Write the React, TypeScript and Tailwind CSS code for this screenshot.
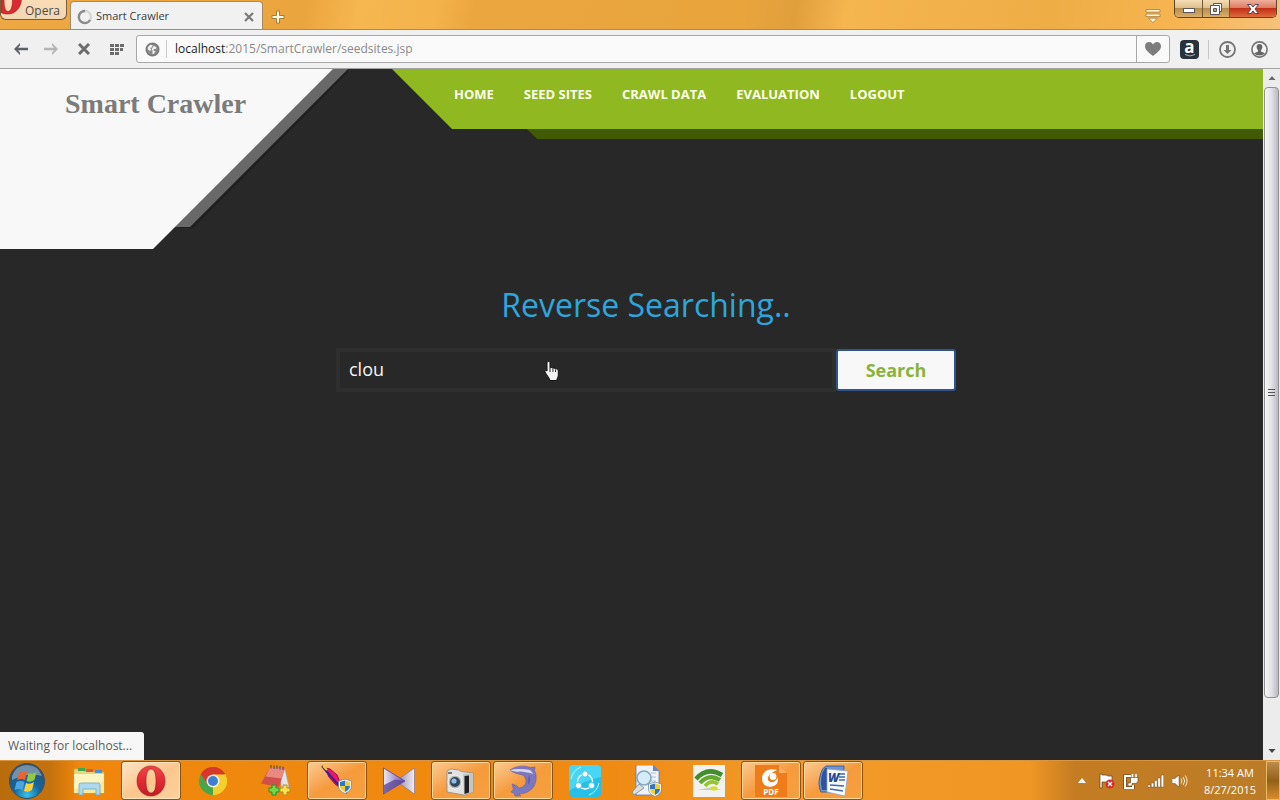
import { useState } from "react";
import type { ReactNode } from "react";

function OperaO({ className }: { className: string }) {
  return (
    <svg viewBox="0 0 30 32" className={className} aria-hidden="true">
      <defs>
        <linearGradient id="operaRed" x1="0" y1="0" x2="0" y2="1">
          <stop offset="0" stopColor="#f0474b" />
          <stop offset="0.5" stopColor="#e02a30" />
          <stop offset="1" stopColor="#bf1f26" />
        </linearGradient>
      </defs>
      <path
        fillRule="evenodd"
        d="M15 1C7 1 1 7.500 1 16s6 15 14 15 14-6.500 14-15S23 1 15 1Zm0 3c3.600 0 5 5 5 12s-1.400 12-5 12-5-5-5-12 1.400-12 5-12Z"
        fill="url(#operaRed)"
        stroke="#a8181d"
        strokeWidth="0.6"
      />
    </svg>
  );
}

function TitleBar() {
  return (
    <div className="flex h-[29px] items-start bg-[linear-gradient(100deg,#eda843_0%,#eba53e_24%,#f6b750_28%,#f4b34b_34%,#eba640_37%,#e9a53c_58%,#e19f3c_62%,#f5b54f_66%,#efad46_82%,#f7b552_92%,#f6c27a_100%)]">
      <button
        type="button"
        className="flex h-5 w-[67px] items-end overflow-hidden rounded-b-md border border-t-0 border-[#7b5a34] bg-gradient-to-b from-[#f8dcb6] to-[#f3d6b4] text-[12px] leading-4 text-[#4b4b4b]"
      >
        <svg viewBox="0 0 22 20" className="h-5 w-[22px] shrink-0" aria-hidden="true">
          <path
            fillRule="evenodd"
            d="M0 0h20.500C20 8 15 15 7 15 4 15 2 14.500 0 13.500ZM3 0c0 8 1 12.500 4 12.500S11.500 8 11.500 0Z"
            fill="#dc2830"
            stroke="#a8181d"
            strokeWidth="0.6"
          />
        </svg>
        <span className="ml-0.5">Opera</span>
      </button>
      <div className="ml-[3px] mt-px flex h-7 w-[193px] items-center rounded-t-[4px] border border-b-0 border-[#a08c6c] bg-[#f1f1f1] pl-1.5 pr-2 pt-0.5">
        <svg viewBox="0 0 16 16" className="h-4 w-4" fill="none" strokeWidth="2.400" aria-hidden="true">
          <circle cx="8" cy="8" r="6" stroke="#d6d6d6" />
          <path d="M8 2a6 6 0 1 0 5 9" stroke="#8b8b8b" />
        </svg>
        <span className="ml-[3px] flex-1 whitespace-nowrap text-[11px] text-[#3c3c3c]">Smart Crawler</span>
        <button type="button" aria-label="Close tab">
          <svg viewBox="0 0 10 10" className="h-[10px] w-[10px]" stroke="#7a7a7a" strokeWidth="2.200" aria-hidden="true">
            <path d="M1 1l8 8M9 1L1 9" />
          </svg>
        </button>
      </div>
      <button type="button" aria-label="New tab" className="ml-2 mt-2.5">
        <svg viewBox="0 0 14 14" className="h-[14px] w-[14px]" aria-hidden="true">
          <path
            d="M5.500 1h3v4.500H13v3H8.500V13h-3V8.500H1v-3h4.500Z"
            fill="#fff8e4"
            stroke="#a87c3a"
          />
        </svg>
      </button>
      <div className="flex-1" />
      <button type="button" aria-label="Tab menu" className="mr-3 mt-2">
        <svg viewBox="0 0 18 16" className="h-4 w-[18px]" fill="#fff4d8" stroke="#a87c3a" strokeWidth="0.8" aria-hidden="true">
          <path d="M2 1.500h14v2.600H2ZM2 6h14v2.600H2ZM4.500 10.200h9L9 14.600Z" />
        </svg>
      </button>
      <div className="mr-[3px] flex h-[18px] w-[103px] overflow-hidden rounded-b-[5px] border border-t-0 border-[#5d4630]">
        <button type="button" aria-label="Minimize" className="flex w-7 items-center justify-center border-r border-[#6f5738] bg-[linear-gradient(#f3dcb4_0%,#dfbf8e_45%,#b98d4c_50%,#d9ae68_100%)]">
          <svg viewBox="0 0 14 10" className="h-[10px] w-[14px]" aria-hidden="true">
            <rect x="1.500" y="4.500" width="11" height="4" fill="#fff" stroke="#5b5560" />
          </svg>
        </button>
        <button type="button" aria-label="Restore" className="flex w-[27px] items-center justify-center border-r border-[#6f5738] bg-[linear-gradient(#f3dcb4_0%,#dfbf8e_45%,#b98d4c_50%,#d9ae68_100%)]">
          <svg viewBox="0 0 14 14" className="h-[14px] w-[14px]" fill="#fff" stroke="#5b5560" aria-hidden="true">
            <path d="M4.500 1.500h8v8h-8Z" />
            <path d="M1.500 3.500h9v9h-9Z" />
            <path d="M4.500 6.500h3v3h-3Z" fill="#c79c60" />
          </svg>
        </button>
        <button type="button" aria-label="Close" className="flex flex-1 items-center justify-center bg-[linear-gradient(#eeb09a_0%,#dd7c62_45%,#c23017_50%,#df6a3c_100%)]">
          <svg viewBox="0 0 14 12" className="h-3 w-[14px]" aria-hidden="true">
            <path d="M1.500 1.500h3.500l2 2.500 2-2.500h3.500L9 6l3.500 4.500H9L7 8l-2 2.500H1.500L5 6Z" fill="#fff" stroke="#5f4350" />
          </svg>
        </button>
      </div>
    </div>
  );
}

function Toolbar() {
  return (
    <div className="flex h-10 items-center border-y border-t-[#a88c5c] border-b-[#a3a3a3] bg-[#f0f0f0] pl-3.5 pr-3">
      <button type="button" aria-label="Back">
        <svg viewBox="0 0 14 12" className="h-3 w-[14px]" aria-hidden="true">
          <path d="M0 6l6-6v2.500L4 4.800h10v2.400H4l2 2.300V12Z" fill="#5c6268" />
        </svg>
      </button>
      <button type="button" aria-label="Forward" className="ml-4">
        <svg viewBox="0 0 14 12" className="h-3 w-[14px]" aria-hidden="true">
          <path d="M14 6L8 0v2.500l2 2.300H0v2.400h10L8 9.500V12Z" fill="#b4b4b4" />
        </svg>
      </button>
      <button type="button" aria-label="Stop" className="ml-5">
        <svg viewBox="0 0 12 12" className="h-3 w-3" stroke="#6c6c6c" strokeWidth="3" aria-hidden="true">
          <path d="M1 1l10 10M11 1L1 11" />
        </svg>
      </button>
      <button type="button" aria-label="Speed Dial" className="ml-5">
        <svg viewBox="0 0 14 11" className="h-[11px] w-[14px]" fill="#6c6c6c" aria-hidden="true">
          <path d="M0 0h4v3H0ZM5 0h4v3H5ZM10 0h4v3h-4ZM0 4h4v3H0ZM5 4h4v3H5ZM10 4h3v3h-3ZM0 8h4v3H0ZM5 8h4v3H5Z" />
        </svg>
      </button>
      <div className="ml-3 flex h-7 flex-1 items-stretch rounded-[3px] border border-[#a8a8a8] bg-[#fafafa]">
        <div className="my-1 flex w-[30px] items-center justify-center border-r border-[#cccccc] pl-0.5">
          <svg viewBox="0 0 16 16" className="h-[15px] w-[15px]" aria-hidden="true">
            <circle cx="8" cy="8" r="6.600" fill="#8c8c8c" stroke="#7a7a7a" strokeWidth="1.800" />
            <path d="M3 5.500l2.500-2.500 2.500.5-.5 2-2 1 1 1.500-1 1.500L3 8ZM9.500 4l3 2-1.500 1.500H9l.5 2 1.500.500-1.500 2.500-1.500.500V9L7 8l1-2Z" fill="#f2f2f2" />
          </svg>
        </div>
        <p className="flex-1 self-center pl-2 text-[12px] text-[#8a8a8a]">
          <span className="text-[#222]">localhost</span>:2015/SmartCrawler/seedsites.jsp
        </p>
        <button type="button" aria-label="Bookmark" className="flex w-[33px] items-center justify-center border-l border-[#a8a8a8]">
          <svg viewBox="0 0 16 14" className="h-[14px] w-4" aria-hidden="true">
            <path d="M8 14C4 11 0 8 0 4.300 0 1.500 2 0 4 0c1.800 0 3.200 1 4 2.500C8.800 1 10.200 0 12 0c2 0 4 1.500 4 4.300C16 8 12 11 8 14Z" fill="#7d7d7d" />
          </svg>
        </button>
      </div>
      <button type="button" aria-label="Amazon" className="ml-2.5 flex h-[19px] w-[19px] flex-col items-center rounded-sm bg-[#28323c] text-[17px] font-bold leading-[14px] text-white">
        <span>a</span>
        <svg viewBox="0 0 12 3" className="h-[3px] w-3" fill="none" stroke="#a9b2ba" aria-hidden="true">
          <path d="M1 0.500q5 3 10 0" />
        </svg>
      </button>
      <div className="ml-[9px] h-[19px] w-px bg-[#c6c6c6]" />
      <button type="button" aria-label="Downloads" className="ml-2.5">
        <svg viewBox="0 0 17 17" className="h-[17px] w-[17px]" aria-hidden="true">
          <circle cx="8.500" cy="8.500" r="7.500" fill="none" stroke="#747474" strokeWidth="1.800" />
          <path d="M7 4h3v5h2.500l-4 4-4-4H7Z" fill="#747474" />
        </svg>
      </button>
      <button type="button" aria-label="Account" className="ml-[15px]">
        <svg viewBox="0 0 17 17" className="h-[17px] w-[17px]" aria-hidden="true">
          <circle cx="8.500" cy="8.500" r="7.600" fill="#f4f4f4" stroke="#747474" strokeWidth="1.600" />
          <path d="M8.500 3C6.500 3 5.500 4.300 5.600 6c.1 1.500.7 2.500 1.400 3.200v1.300L3 12.200a7.500 7.500 0 0 0 11 0l-4-1.700V9.200c.7-.7 1.300-1.700 1.400-3.200C11.500 4.300 10.500 3 8.500 3Z" fill="#666" />
        </svg>
      </button>
    </div>
  );
}

const navItems = ["HOME", "SEED SITES", "CRAWL DATA", "EVALUATION", "LOGOUT"];

function SiteHeader() {
  return (
    <header className="flex items-start">
      <div className="relative h-[180px] w-[348px] shrink-0">
        <svg viewBox="0 0 348 180" className="absolute inset-0 h-full w-full" aria-hidden="true">
          <path d="M336 0h15L193 159h-15Z" fill="#1f1f1f" />
          <path d="M333 0h15L190 158h-15Z" fill="#696969" />
          <path d="M0 0h333L153 180H0Z" fill="#f8f8f8" />
        </svg>
        <a href="#home" className="relative ml-[65px] mt-3 block w-fit whitespace-nowrap font-['Liberation_Serif',serif] text-[28px] font-bold leading-[46px] text-[#7b7b7b]">
          Smart Crawler
        </a>
      </div>
      <div className="ml-11 flex-1">
        <nav className="h-[60px] bg-[#8fb821] pl-[62px] [clip-path:polygon(0_0,100%_0,100%_100%,60px_100%)]">
          <ul className="flex h-[52px] items-center gap-[30px] whitespace-nowrap text-[13px] font-bold text-[#fbffe8]">
            {navItems.map((item) => (
              <li key={item}>
                <a href={"#" + item.toLowerCase().replace(" ", "-")}>{item}</a>
              </li>
            ))}
          </ul>
        </nav>
        <div className="ml-[135px] h-2.5 bg-[#425a00] [clip-path:polygon(0_0,100%_0,100%_100%,10px_100%)]" />
      </div>
    </header>
  );
}

function SearchSection() {
  const [query, setQuery] = useState("clou");
  return (
    <section className="flex flex-col items-center pl-[29px] pt-8">
      <h1 className="text-[32px] leading-[48px] text-[#2ea6dd]">Reverse Searching..</h1>
      <form className="relative mt-[19px] flex w-full max-w-[620px]" onSubmit={(e) => e.preventDefault()}>
        <input
          type="text"
          aria-label="Search term"
          value={query}
          onChange={(e) => setQuery(e.target.value)}
          className="h-11 min-w-0 flex-1 border-4 border-[#2f2f2f] bg-[#282828] px-[9px] pb-0.5 text-[18px] text-[#f6f6f6] outline-none"
        />
        <button type="submit" className="my-px h-[42px] w-[120px] rounded-[3px] border-2 border-[#31548c] bg-[#f8f8f8] text-[18px] font-bold text-[#8ab33a]">
          Search
        </button>
        <svg viewBox="0 0 16 22" className="absolute left-[208px] top-3 h-[22px] w-4" aria-hidden="true">
          <path
            d="M4.500 1.500c1.200 0 1.500.6 1.500 1.500v5c.8-.8 2.400-.6 2.800.3.900-.5 2.100-.1 2.500.7 1.500-.5 3 .3 3 2v4c0 2-1.300 3-1.500 5.500H6C5.500 18 3 15.500 1 12c-.6-1.500 1-2 2-1V3c0-.9.600-1.500 1.500-1.500Z"
            fill="#f4f4f4"
            stroke="#111"
          />
          <path d="M6 8v4M8.900 8.500V12M11.500 9.500V12" stroke="#333" fill="none" />
        </svg>
      </form>
    </section>
  );
}

function Scrollbar() {
  return (
    <div className="flex w-[17px] shrink-0 flex-col items-center bg-[#ececec]" aria-hidden="true">
      <svg viewBox="0 0 17 18" className="h-[18px] w-[17px]">
        <path d="M5.500 11l3.500-4 3.500 4Z" fill="#6a6a6a" />
      </svg>
      <div className="flex w-[15px] flex-[611] items-center justify-center rounded-sm border border-[#909090] bg-gradient-to-r from-[#f7f7f7] via-[#e2e2e6] to-[#b9b9c0]">
        <svg viewBox="0 0 7 8" className="h-2 w-[7px]" stroke="#555">
          <path d="M0 .5h7M0 3.500h7M0 6.500h7" />
        </svg>
      </div>
      <div className="flex-[44]" />
      <svg viewBox="0 0 17 18" className="h-[18px] w-[17px]">
        <path d="M5.500 7h7L9 11Z" fill="#444" />
      </svg>
    </div>
  );
}

function Shield({ x, y }: { x: number; y: number }) {
  return (
    <g transform={`translate(${x} ${y})`}>
      <path d="M7 0l6.500 2v5c0 3.500-3 6-6.500 7.500C3.500 13 .5 10.500.5 7V2Z" fill="#f0f4f8" stroke="#6d7f8c" strokeWidth="0.7" />
      <path d="M7 1.500V7H2V3ZM7 7h5c0 2.500-2 4.500-5 6Z" fill="#2d78c8" />
      <path d="M7 1.500L12 3v4H7ZM7 7H2c0 2.500 2 4.500 5 6Z" fill="#f3cf2c" />
    </g>
  );
}

const art = "h-8 w-8";

const explorerIcon = (
  <svg viewBox="0 0 32 32" className={art}>
    <path d="M1 4h8l2 2h8l2 1h10v21H1Z" fill="#ecd37c" stroke="#c8a94c" strokeWidth="0.7" />
    <path d="M5 3h7v3H5Z" fill="#3fa84a" />
    <path d="M13 4h7v3h-7Z" fill="#d95a35" />
    <path d="M22 5h7v3h-7Z" fill="#4a8ed6" />
    <path d="M1 9h30v19H1Z" fill="#f7ea9f" />
    <path d="M1 9h30v7L1 24Z" fill="#fcf5bf" />
    <path d="M6 30V20q0-2 2-2h17q2 0 2 2v10h-4v-6H10v6Z" fill="#acd9ee" stroke="#6aa9c9" strokeWidth="0.8" />
  </svg>
);

const chromeIcon = (
  <svg viewBox="0 0 32 32" className={art}>
    <path d="M16 16L3.900 9A14 14 0 0 1 28.100 9Z" fill="#d8382c" />
    <path d="M16 16L28.100 9A14 14 0 0 1 16 30Z" fill="#f6cf2b" />
    <path d="M16 16V30A14 14 0 0 1 3.900 9Z" fill="#45a748" />
    <path d="M16 9.500h12.300A14 14 0 0 0 3.900 9L10.500 19.500Z" fill="#d8382c" />
    <path d="M21.600 19.200L16 30A14 14 0 0 0 28.300 9.500H16Z" fill="#f6cf2b" />
    <circle cx="16" cy="16" r="6.500" fill="#f4f4f0" />
    <circle cx="16" cy="16" r="5" fill="#3f7fd0" />
  </svg>
);

const notepadIcon = (
  <svg viewBox="0 0 32 32" className={art}>
    <path d="M20 3l6 1 4 18-7 5Z" fill="#dde6ee" stroke="#9aa4ad" strokeWidth="0.6" />
    <path d="M11 2l15 1.500-6 18.500-18-3.500Z" fill="#d04f4c" />
    <path d="M11 2l15 1.500-3.500 10L6.500 11.500Z" fill="#e88a80" />
    <path d="M12 0v3.500M15 .5v3.500M18 .5V4M21 1v3.500M24 1.500V5" stroke="#444" />
    <path d="M13 20h4v3h3v4h-3v3h-4v-3h-3v-4h3Z" fill="#6edb4a" stroke="#2f8a20" />
    <path d="M24 20h4v3h3v4h-3v3h-4v-3h-3v-4h3Z" fill="#f8e050" stroke="#b48b18" />
  </svg>
);

const featherIcon = (
  <svg viewBox="0 0 32 32" className={art}>
    <path d="M4 3l5 1 7 6 3 7 5 9-10-7-6-7Z" fill="#ee1470" stroke="#8a1050" />
    <path d="M1 1l5 6 8 9 12 12" stroke="#3a2090" strokeWidth="2" fill="none" />
    <path d="M2 1l4 4" stroke="#f2d020" strokeWidth="2" />
    <Shield x={17} y={14} />
  </svg>
);

const bowtieIcon = (
  <svg viewBox="0 0 32 32" className={art}>
    <defs>
      <linearGradient id="bowLeft">
        <stop offset="0" stopColor="#efeaf8" />
        <stop offset="1" stopColor="#6a50a8" />
      </linearGradient>
      <linearGradient id="bowRight">
        <stop offset="0" stopColor="#8f86a8" />
        <stop offset="1" stopColor="#efedf4" />
      </linearGradient>
    </defs>
    <path d="M31.500 3v26L13 16Z" fill="url(#bowRight)" stroke="#8078a0" strokeWidth="0.7" />
    <path d="M.5 3v26L22 16Z" fill="url(#bowLeft)" stroke="#57419a" strokeWidth="0.8" />
    <path d="M1 28.500L21.500 16 12 14.500 1 20Z" fill="#5d4699" opacity="0.8" />
  </svg>
);

const cameraIcon = (
  <svg viewBox="0 0 32 32" className={art}>
    <path d="M2 6l4-2 8 1 2 1.500 12 1.500v19l-9 3L2 27Z" fill="#e2e3e1" stroke="#8b8b88" strokeWidth="0.8" />
    <path d="M18 9l10-1v19l-9 3Z" fill="#c4c6c4" />
    <path d="M19.500 11l4.500-.5v17l-4.500 1.500Z" fill="#202020" />
    <path d="M3 7h4v2H3Z" fill="#74787b" />
    <circle cx="10" cy="17" r="7" fill="#b3b9bd" stroke="#f6f7f7" />
    <circle cx="10" cy="17" r="5" fill="#35465a" />
    <circle cx="9" cy="16" r="2.600" fill="#8fc0e8" />
  </svg>
);

const dolphinIcon = (
  <svg viewBox="0 0 32 32" className={art}>
    <path
      d="M3 5C8 1 17 0 23 2.500L28 2l-.5 3.500C30 10 29.500 17 27 21c-3 5-9 8-15 7.500L14 31H8l-1-3-3-1 2.500-3L5 19l4.500 1.500L12 23c4-.5 6.500-3 7-6 .2-3-1-5-3-7C11 9 6 8 3 5Z"
      fill="#7b78c2"
      stroke="#625ea6"
      strokeWidth="0.6"
    />
    <path d="M3 5c6-1.500 13-1.500 20 0l3.500 4C18 5.500 10 8.500 3 5Z" fill="#dcd9ee" />
    <path d="M22 10q3 5-1 10-1-5 1-10Z" fill="#6460ac" />
  </svg>
);

const shareIcon = (
  <svg viewBox="0 0 32 32" className={art}>
    <rect width="32" height="32" rx="4" fill="#25bfe8" />
    <path d="M0 4q0-4 4-4h24q4 0 4 4v8Q18 14 0 26Z" fill="#48d6f4" />
    <circle cx="16" cy="16.500" r="7.500" fill="none" stroke="#fff" strokeWidth="1.400" />
    <g fill="#fff" stroke="#2fc5ec">
      <circle cx="16" cy="9" r="3.200" />
      <circle cx="9.500" cy="20.500" r="3.200" />
      <circle cx="22.500" cy="20.500" r="3.200" />
    </g>
    <path d="M2 14Q4 5 12 2M30 18q-2 9-10 12" fill="none" stroke="#c9f4fd" />
  </svg>
);

const searchDocIcon = (
  <svg viewBox="0 0 32 32" className={art}>
    <path d="M5 0h17l6 6v24H5Z" fill="#eef3fa" stroke="#5e77ae" strokeWidth="0.8" />
    <path d="M22 0v6h6Z" fill="#7186b6" />
    <path d="M20 8h5M20 12h5M20 16h5" stroke="#aac0dc" />
    <path d="M8 19L1 27l2 3 10-7Z" fill="#d9dee2" stroke="#77828a" strokeWidth="0.8" />
    <circle cx="13" cy="13" r="7" fill="#d3ecf8" stroke="#86a5ba" strokeWidth="1.600" />
    <Shield x={17} y={17} />
  </svg>
);

const wifiIcon = (
  <svg viewBox="0 0 32 32" className={art}>
    <rect width="32" height="32" fill="#f1f1ef" />
    <path d="M4 25l16-3 8 3Z" fill="#c9cac6" />
    <path d="M3 14Q14 1 29 10" fill="none" stroke="#3f8f2b" strokeWidth="4.500" />
    <path d="M7 18q9-10 20-3" fill="none" stroke="#62a92d" strokeWidth="4" />
    <path d="M12 21q6-7 13-2" fill="none" stroke="#93c62f" strokeWidth="3.500" />
    <ellipse cx="21" cy="23.500" rx="3.500" ry="2.200" fill="#d6e02c" />
  </svg>
);

const pdfIcon = (
  <svg viewBox="0 0 32 32" className={art}>
    <path d="M0 0h24l8 8v24H0Z" fill="#ee7c18" />
    <path d="M24 0v8h8Z" fill="#f8ae64" />
    <path d="M22 5C13 2.500 7 7 7 13.500s5 9 10 8c5-1 7-5 5.500-9-1 3-4 5.500-7 4.500-3-1-3.500-4-1.500-6.500C16 8 18.500 6.500 22 5Z" fill="#fff" />
    <circle cx="18" cy="11.500" r="3.400" fill="#fff" />
    <text x="16" y="30" textAnchor="middle" fontSize="8" fontWeight="700" fill="#fff">PDF</text>
  </svg>
);

const wordIcon = (
  <svg viewBox="0 0 32 32" className={art}>
    <path d="M9 1h18l-2 26H4q-4-8 0-19 1-5 5-7Z" fill="#6e94d1" stroke="#3f63a6" />
    <path d="M8 3Q2 12 5 25h5V3Z" fill="#2d559f" />
    <path d="M10 4l21 2-3 25-18-4Z" fill="#fafcff" stroke="#8aa3cc" strokeWidth="0.8" />
    <path d="M22 9h6M22 12h6M22 15h6M13 20l14 1M13 24l13 2" stroke="#3e68b1" strokeWidth="1.600" />
    <text x="11" y="17" fontSize="12" fontWeight="800" fontStyle="italic" fill="#234c98">W</text>
  </svg>
);

type Task = { name: string; icon: ReactNode; state: "idle" | "open" | "active" };

const tasks: Task[] = [
  { name: "Explorer", icon: explorerIcon, state: "idle" },
  { name: "Opera browser", icon: <OperaO className="h-8 w-[30px]" />, state: "active" },
  { name: "Chrome", icon: chromeIcon, state: "idle" },
  { name: "Notes", icon: notepadIcon, state: "idle" },
  { name: "Server", icon: featherIcon, state: "open" },
  { name: "Media player", icon: bowtieIcon, state: "idle" },
  { name: "Camera", icon: cameraIcon, state: "open" },
  { name: "Database", icon: dolphinIcon, state: "open" },
  { name: "Share", icon: shareIcon, state: "idle" },
  { name: "Document search", icon: searchDocIcon, state: "idle" },
  { name: "Hotspot", icon: wifiIcon, state: "idle" },
  { name: "PDF reader", icon: pdfIcon, state: "open" },
  { name: "Word", icon: wordIcon, state: "open" },
];

const taskStyles = {
  idle: "border-transparent",
  open: "border-[#ffd9a0] bg-gradient-to-br from-[#fbc98c] via-[#f59b3c] to-[#f7a040] outline outline-[#8b5317]",
  active: "border-[#ffe6c0] bg-gradient-to-br from-[#fde3c4] via-[#fcc68e] to-[#fbd29e] outline outline-[#8b5317]",
};

function Taskbar() {
  return (
    <footer className="flex h-10 items-stretch border-t border-[#d9953f] bg-[linear-gradient(90deg,#b86c0c_0px,#c4720d_50px,#f0870c_80px,#ef8a12_600px,#f39a28_800px,#f09625_1030px,#c47c22_1075px,#bb7c28_100%)]">
      <button type="button" aria-label="Start" className="flex w-[54px] items-center justify-center">
        <svg viewBox="0 0 38 38" className="h-[38px] w-[38px]" aria-hidden="true">
          <defs>
            <radialGradient id="orb" cx="0.5" cy="0.9" r="0.85">
              <stop offset="0" stopColor="#35c3ee" />
              <stop offset="0.45" stopColor="#13669e" />
              <stop offset="1" stopColor="#31506a" />
            </radialGradient>
          </defs>
          <circle cx="19" cy="19" r="17.500" fill="url(#orb)" stroke="#3e4f5c" />
          <path d="M4 14Q8 3 19 3t15 11q-15-4-30 4Z" fill="#dcebf4" opacity="0.4" />
          <path d="M11 11q4-3 8-1l-2 8q-4-2-8 0Z" fill="#ec6230" />
          <path d="M20.500 11q4 2 8-1l-2 8q-4 3-8 1Z" fill="#94c83e" />
          <path d="M8.500 20q4-2 8 0l-2 8q-4-2-8 0Z" fill="#4ba5e0" />
          <path d="M18 21q4 2 8-1l-2 8q-4 3-8 1Z" fill="#fbd03c" />
        </svg>
      </button>
      <div className="ml-[5px] flex gap-0.5">
        {tasks.map((task) => (
          <button key={task.name} type="button" aria-label={task.name} className="flex w-[60px] items-center justify-center p-px">
            <span className={`flex h-full w-full items-center justify-center rounded-[2px] border ${taskStyles[task.state]}`}>
              {task.icon}
            </span>
          </button>
        ))}
      </div>
      <div className="flex-1" />
      <div className="flex items-center">
        <svg viewBox="0 0 8 5" className="h-[5px] w-2" aria-hidden="true">
          <path d="M0 5l4-5 4 5Z" fill="#fff" />
        </svg>
        <svg viewBox="0 0 16 16" className="ml-[13px] h-4 w-4" aria-hidden="true">
          <path d="M1 1v14h2V9h4l2 1h4V3H9L7 2H3V1Z" fill="#fff" stroke="#5c4020" strokeWidth="0.7" />
          <circle cx="11" cy="11" r="4.500" fill="#d82c2c" />
          <path d="M9 9l4 4M13 9l-4 4" stroke="#fff" strokeWidth="1.400" />
        </svg>
        <svg viewBox="0 0 16 16" className="ml-2 h-4 w-4" fill="none" aria-hidden="true">
          <path d="M8 3H2v12h8v-3" stroke="#5c4020" strokeWidth="3.200" />
          <path d="M8 3H2v12h8v-3" stroke="#fff" strokeWidth="2" />
          <path d="M9.500 1v4M13 1v4" stroke="#fff" strokeWidth="1.600" />
          <path d="M7.500 4.500h7.500v3q0 3-3 3H9v2.500H5V10h2.500Z" fill="#fff" stroke="#5c4020" strokeWidth="0.6" />
        </svg>
        <svg viewBox="0 0 16 14" className="ml-[9px] h-[14px] w-4" fill="#fff" stroke="#5c4020" strokeWidth="0.4" aria-hidden="true">
          <path d="M0 11h2.500v2H0ZM3.300 9h2.500v4H3.300ZM6.600 6.500h2.500V13H6.600ZM9.900 4h2.500v9H9.900ZM13.200 1h2.500v12h-2.500Z" />
        </svg>
        <svg viewBox="0 0 16 14" className="ml-2 h-[14px] w-4" aria-hidden="true">
          <path d="M0 4.500h3L7 1v12L3 9.500H0Z" fill="#fff" stroke="#5c4020" strokeWidth="0.5" />
          <path d="M9 4.500q2 2.500 0 5M11.200 3q3 4 0 8M13.300 1.500q3.500 5.500 0 11" fill="none" stroke="#fbe6c4" />
        </svg>
        <p className="ml-3.5 w-14 whitespace-nowrap text-center text-[11px] leading-[17px] text-white">
          <span className="block">11:34 AM</span>
          <span className="block">8/27/2015</span>
        </p>
      </div>
      <button type="button" aria-label="Show desktop" className="ml-2 w-[14px] border border-[#e8b968] bg-gradient-to-b from-[#bd8d4c] via-[#936018] to-[#d98d2c]" />
    </footer>
  );
}

export default function App() {
  return (
    <div className="flex min-h-screen flex-col bg-[#282828] font-['Open_Sans','Noto_Sans',sans-serif]">
      <TitleBar />
      <Toolbar />
      <div className="flex flex-1 items-stretch">
        <div className="flex min-w-0 flex-1 flex-col">
          <SiteHeader />
          <main className="flex-1">
            <SearchSection />
          </main>
          <p role="status" className="flex h-7 w-36 items-center whitespace-nowrap rounded-tr-[3px] bg-[#f7f7f7] pl-2 text-[12px] text-[#5c5c5c]">
            Waiting for localhost...
          </p>
        </div>
        <Scrollbar />
      </div>
      <Taskbar />
    </div>
  );
}
